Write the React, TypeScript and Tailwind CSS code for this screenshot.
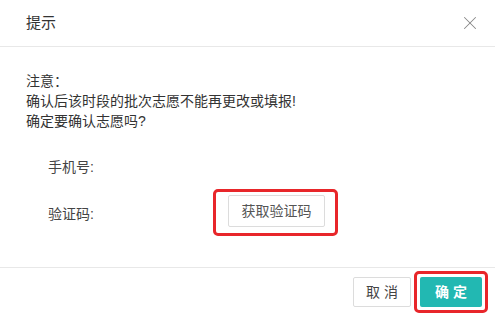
import { X } from 'lucide-react'

export default function App() {
  return (
    <div
      className="w-[495px] h-[320px] bg-white text-[#333] overflow-hidden"
      style={{ fontFamily: '"Liberation Sans", "Noto Sans CJK SC", sans-serif' }}
    >
      <div className="h-[47px] flex items-center justify-between pl-[26px] pr-[14px] border-b border-[#e8e8e8]">
        <span className="text-[15px] leading-[20px]">提示</span>
        <X className="w-[22px] h-[22px] text-[#888]" strokeWidth={1.1} />
      </div>

      <div className="h-[220px] pt-[24px] pl-[26px] text-[14px] leading-[20px]">
        <div>注意：</div>
        <div>确认后该时段的批次志愿不能再更改或填报!</div>
        <div>确定要确认志愿吗?</div>

        <div className="mt-[26px] pl-[22px] flex items-center h-[20px]">
          <span className="text-[#444]">手机号:</span>
        </div>

        <div className="mt-[12px] pl-[22px] flex items-center">
          <span className="w-[165px] text-[#444] pt-[2px]">验证码:</span>
          <div className="border-[3px] border-[#e8262a] rounded-[5px] pt-[3px] pb-[6px] pl-[12px] pr-[10px]">
            <button className="w-[97px] h-[32px] border border-[#dcdcdc] rounded-[2px] bg-white text-[14px] text-[#555]">
              获取验证码
            </button>
          </div>
        </div>
      </div>

      <div className="border-t border-[#e8e8e8] flex justify-end pt-[3px] pr-[7px]">
        <button className="mt-[6px] w-[58px] h-[30px] border border-[#dcdcdc] rounded-[2px] bg-white text-[14px] text-[#444] mr-[3px]">
          取 消
        </button>
        <div className="border-[3px] border-[#e8262a] rounded-[5px] p-[3px]">
          <button className="w-[62px] h-[30px] rounded-[2px] bg-[#22b8b2] text-white text-[14px] font-bold">
            确 定
          </button>
        </div>
      </div>
    </div>
  )
}
